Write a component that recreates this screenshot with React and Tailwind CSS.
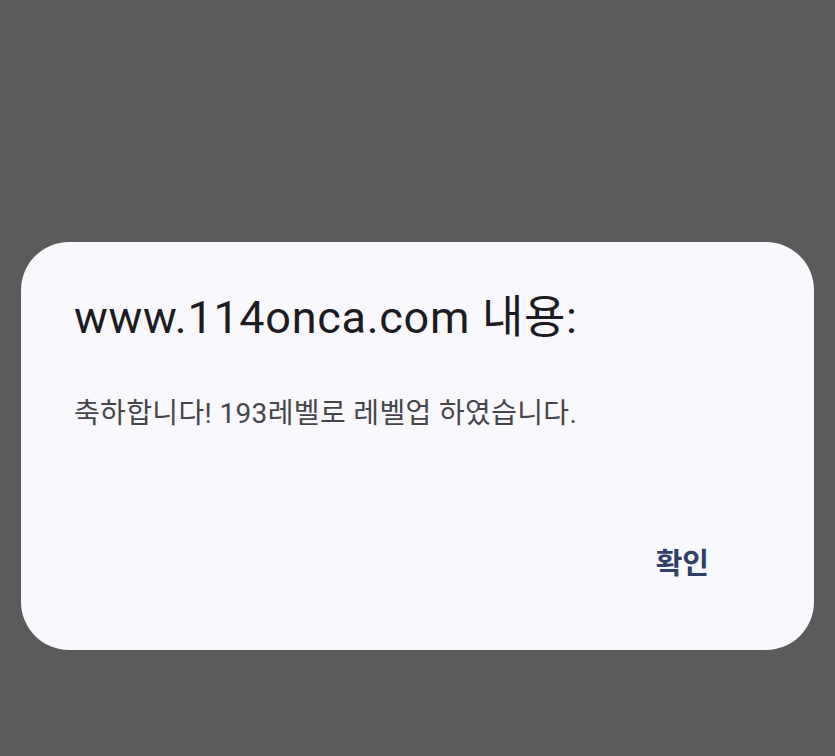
export default function App() {
  return (
    <div className="flex min-h-screen flex-col bg-[#5b5b5b] px-[21px] pt-[242px] font-['Roboto','Noto_Sans_CJK_KR',sans-serif]">
      <div className="flex h-[408px] flex-col rounded-[48px] bg-[#f8f8fd] pl-[53px] pr-[105px] pt-[44px]">
        <h1 className="text-[45px] leading-[64px] font-normal text-[#1c1b1f] tracking-[0.7px]">
          www.114onca.com 내용:
        </h1>
        <p className="mt-[44px] text-[28px] leading-[40px] tracking-[0.35px] text-[#46464a]">
          축하합니다! 193레벨로 레벨업 하였습니다.
        </p>
        <div className="mt-auto mb-[66px] flex justify-end">
          <button className="text-[29px] font-semibold leading-[40px] text-[#2f3f66]">
            확인
          </button>
        </div>
      </div>
    </div>
  );
}
